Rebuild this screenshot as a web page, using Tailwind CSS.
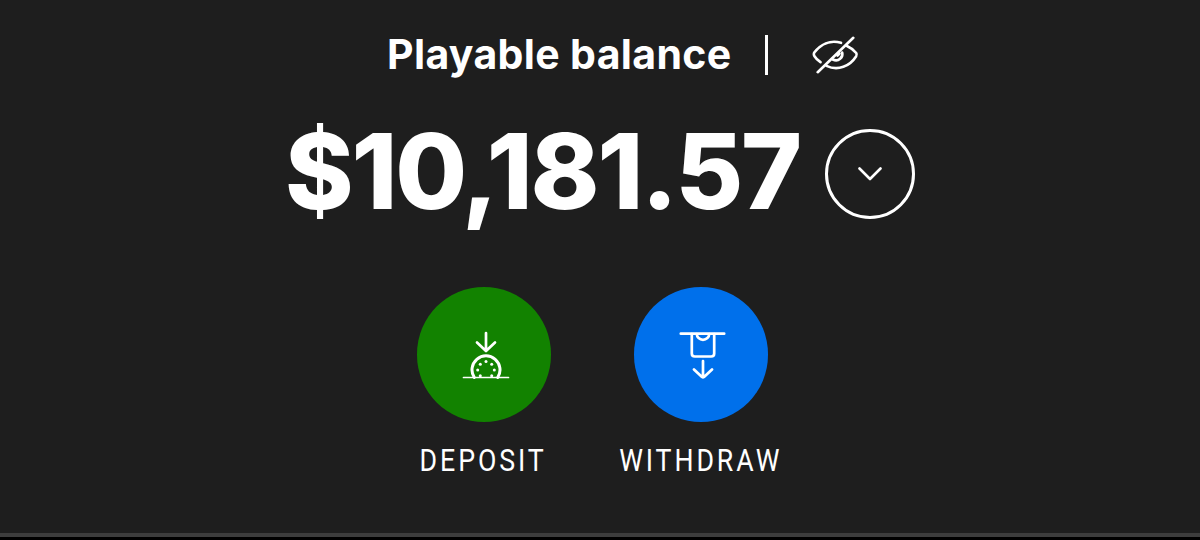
<!DOCTYPE html>
<html lang="en">
  <head>
    <meta charset="UTF-8" />
    <meta name="viewport" content="width=device-width, initial-scale=1.0" />
    <title>Playable balance</title>
    <script src="https://cdn.jsdelivr.net/npm/@tailwindcss/browser@4"></script>
  </head>
  <body class="h-[540px] overflow-hidden bg-[#1e1e1e] text-white flex flex-col font-['Inter',sans-serif]">
    <main class="flex-1 pt-[35px]">
      <!-- Title row -->
      <div class="flex items-center h-10 pl-[387px]">
        <h1 class="w-[378px] pb-0.5 text-[41px] leading-[38px] font-bold tracking-[0.35px] whitespace-nowrap">Playable balance</h1>
        <span class="w-[3px] h-10 bg-white"></span>
        <button class="ml-11" aria-label="Hide balance">
          <svg class="w-[47px] h-[38px]" viewBox="0 0 47 38" fill="none" stroke="currentColor" stroke-width="2.6" stroke-linecap="round">
            <path d="M29 6.8C18 3.5 8.5 8.5 2.3 16.5Q1.3 18.3 2.5 20.2Q4.5 23.5 8.5 26.2" />
            <path d="M35 10Q40.5 12.5 44.2 17Q45.2 18.5 44.2 20.2C38 30 26 35.5 14.5 29.8" />
            <path d="M30.2 16.5C31.5 21 26.5 26.5 20.8 23.5" />
            <path d="M25.5 19.5L27.5 17.5" />
            <path d="M5.7 36.2L41.3 1.8" />
          </svg>
        </button>
      </div>

      <!-- Amount row -->
      <div class="mt-[54px] flex items-center h-[90px] pl-[285px]">
        <p class="w-[540px] pb-1.5 text-[104px] leading-[84px] font-extrabold tracking-[-2.15px] whitespace-nowrap">$10,181.57</p>
        <button class="size-[90px] rounded-full border-[3px] border-white flex items-center justify-center" aria-label="Show details">
          <svg class="w-6 h-[14px]" viewBox="0 0 24 14" fill="none" stroke="currentColor" stroke-width="2.6" stroke-linecap="round" stroke-linejoin="round">
            <path d="M1.5 1.5L12 12L22.5 1.5" />
          </svg>
        </button>
      </div>

      <!-- Actions -->
      <div class="mt-[68px] pl-[417px] flex gap-[83px]">
        <a class="w-[134px] flex flex-col items-center">
          <span class="size-[134.5px] rounded-full bg-[#128200] flex items-center justify-center">
            <svg class="ml-1 mt-0.5 size-[48px]" viewBox="0 0 48 48" fill="none" stroke="currentColor" stroke-width="2.7" stroke-linecap="round" stroke-linejoin="round">
              <path d="M24 2V19.5M15 11.5L24 20L33 11.5" />
              <path d="M12.3 46.5A14 14 0 1 1 35.7 46.5" stroke-width="3" />
              <path d="M1.5 46.5H46.5" stroke-width="1.7" />
              <g fill="currentColor" stroke="none">
                <circle cx="24" cy="30.5" r="1.5" />
                <circle cx="18.3" cy="33.3" r="1.5" />
                <circle cx="29.7" cy="33.3" r="1.5" />
                <circle cx="15.7" cy="39" r="1.5" />
                <circle cx="32.3" cy="39" r="1.5" />
                <circle cx="18.3" cy="44.8" r="1.5" />
                <circle cx="29.7" cy="44.8" r="1.5" />
              </g>
            </svg>
          </span>
          <span class="mt-[18px] -ml-0.5 h-10 text-[32px] leading-10 tracking-[3.5px] whitespace-nowrap scale-x-[0.835] font-['Roboto',sans-serif]">DEPOSIT</span>
        </a>
        <a class="w-[134px] flex flex-col items-center">
          <span class="size-[134.5px] rounded-full bg-[#0070eb] flex items-center justify-center">
            <svg class="ml-1 mt-0.5 size-[48px]" viewBox="0 0 48 48" fill="none" stroke="currentColor" stroke-width="2.7" stroke-linecap="round" stroke-linejoin="round">
              <path d="M1.8 2.7H45.2" />
              <path d="M12.8 3V22.5Q12.8 25.5 15.8 25.5H32.2Q35.2 25.5 35.2 22.5V3" />
              <path d="M17.8 3A6.2 5.8 0 0 0 30.2 3" />
              <path d="M24 30V46M15 38.5L23 46Q24 46.7 25 46L33 38.5" />
            </svg>
          </span>
          <span class="mt-[18px] -ml-px h-10 text-[32px] leading-10 tracking-[3.5px] whitespace-nowrap scale-x-[0.835] font-['Roboto',sans-serif]">WITHDRAW</span>
        </a>
      </div>
    </main>

    <!-- Bottom edge -->
    <div class="h-[7px] border-t-[4px] border-[#3d3d3d] bg-black"></div>
  </body>
</html>
